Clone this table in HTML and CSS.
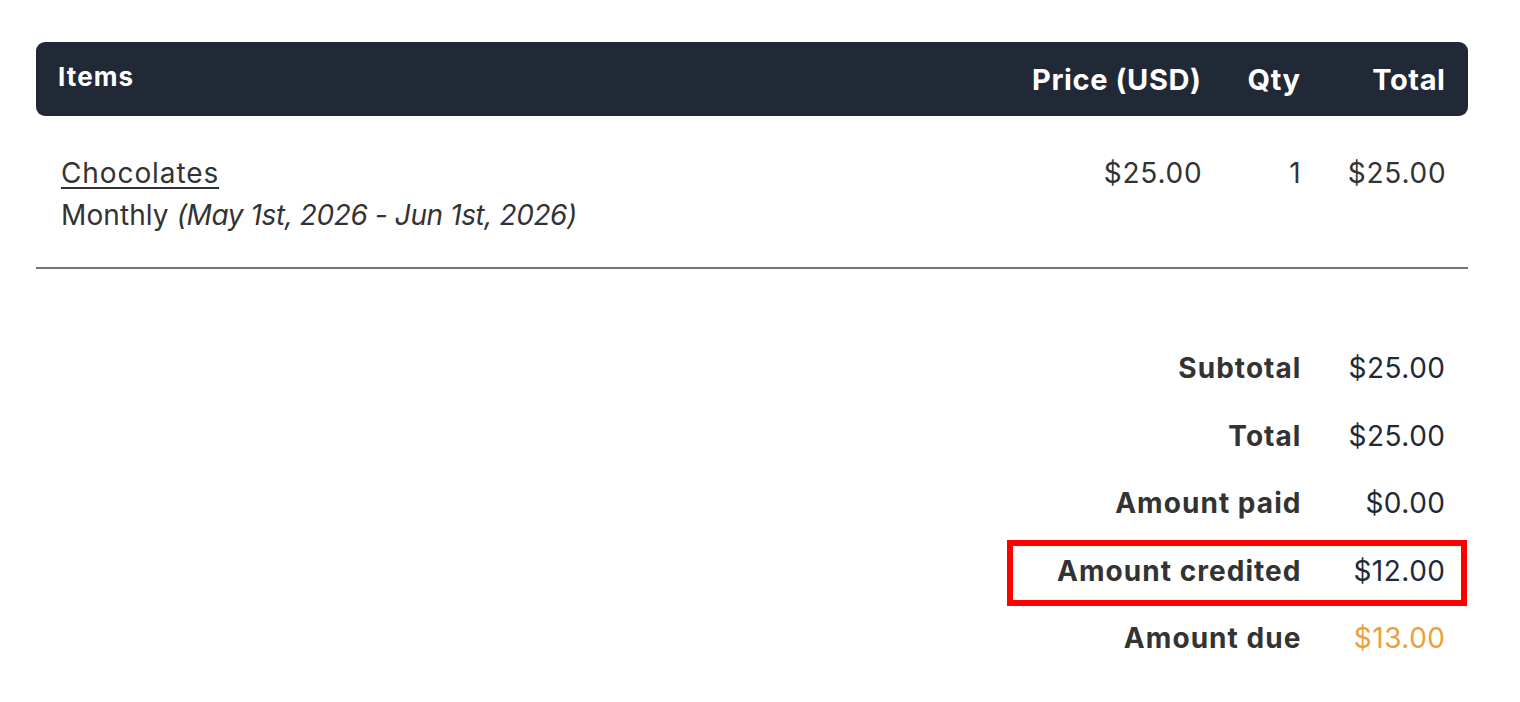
FILE: index.html
```html
<!DOCTYPE html>
<html lang="en">
<head>
<meta charset="utf-8">
<title>Invoice items</title>
<link rel="stylesheet" href="styles.css">
</head>
<body>
<main class="invoice">
  <div class="grid head">
    <div class="cell items-head">Items</div>
    <div class="cell num">Price (USD)</div>
    <div class="cell num">Qty</div>
    <div class="cell num">Total</div>
  </div>
  <div class="grid line-item">
    <div class="cell">
      <a class="item-name" href="#">Chocolates</a>
      <div class="item-meta">Monthly <em>(May 1st, 2026 - Jun 1st, 2026)</em></div>
    </div>
    <div class="cell num">$25.00</div>
    <div class="cell num">1</div>
    <div class="cell num">$25.00</div>
  </div>
  <div class="totals">
    <div class="trow"><span class="tlabel">Subtotal</span><span class="tval">$25.00</span></div>
    <div class="trow"><span class="tlabel">Total</span><span class="tval">$25.00</span></div>
    <div class="trow"><span class="tlabel">Amount paid</span><span class="tval">$0.00</span></div>
    <div class="trow highlight"><span class="tlabel">Amount credited</span><span class="tval">$12.00</span></div>
    <div class="trow"><span class="tlabel">Amount due</span><span class="tval due">$13.00</span></div>
  </div>
</main>
</body>
</html>
```
FILE: styles.css
```css
*, *::before, *::after { box-sizing: border-box; }
html, body { margin: 0; padding: 0; background: #fff; }
body {
  font-family: Inter, "Noto Sans", "Liberation Sans", sans-serif;
  color: #333333;
}
.invoice {
  width: 1432px;
  margin: 42px 0 0 36px;
}
.grid {
  display: grid;
  grid-template-columns: 1fr 191px 99px 145px;
  padding: 0 23px 0 22px;
}
.num { text-align: right; }
.head {
  background: #212936;
  color: #ffffff;
  border-radius: 9px;
  font-weight: 700;
  font-size: 29px;
  letter-spacing: 0.6px;
  height: 74px;
  padding-top: 20px;
  align-items: start;
}
.head .cell { line-height: 36px; }
.head .num { margin-right: -0.6px; }
.head .items-head {
  font-size: 26px;
  line-height: 30px;
  letter-spacing: 1.1px;
}
.line-item {
  font-size: 28px;
  line-height: 42px;
  padding: 36px 23px 31px 25px;
  border-bottom: 2px solid #777777;
  align-items: start;
}
.line-item .num {
  letter-spacing: 0.8px;
  margin-right: -1.5px;
}
.item-name {
  color: #333333;
  text-decoration: underline;
  text-decoration-thickness: 2px;
  text-underline-offset: 4px;
  letter-spacing: 0.9px;
}
.item-meta { letter-spacing: 0.1px; }
.item-meta em { font-style: italic; letter-spacing: -0.4px; }
.totals {
  margin-top: 66px;
  font-size: 28px;
  line-height: 42px;
}
.trow {
  position: relative;
  display: flex;
  justify-content: flex-end;
  padding: 12px 23px 13.5px 0;
}
.tlabel {
  font-weight: 700;
  text-align: right;
  color: #333333;
  letter-spacing: 1.05px;
  margin-right: -1px;
}
.tval {
  width: 145px;
  text-align: right;
  color: #1f2937;
  letter-spacing: 0.5px;
  margin-right: -0.5px;
}
.tval.due { color: #e9a23b; }
.highlight::after {
  content: "";
  position: absolute;
  right: 1px;
  width: 460px;
  top: 2px;
  bottom: -1px;
  border: 6px solid #ff0000;
}
```
